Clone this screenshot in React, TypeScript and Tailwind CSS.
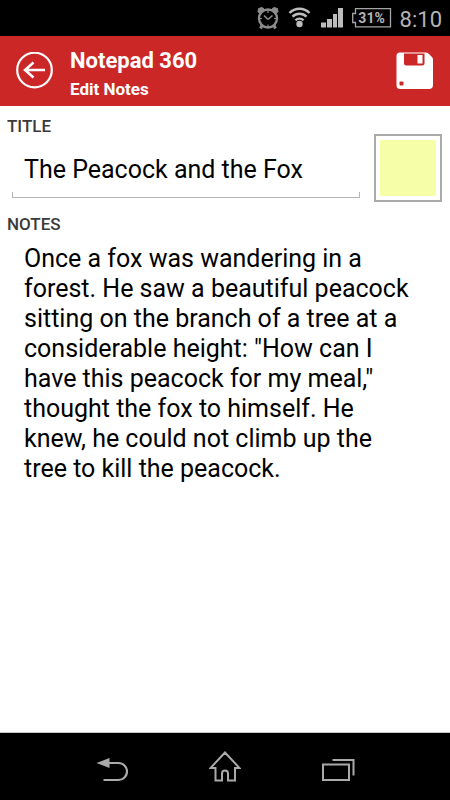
import React from 'react';

const STORY =
    'Once a fox was wandering in a forest. He saw a beautiful peacock sitting on the branch of a tree at a considerable height: "How can I have this peacock for my meal," thought the fox to himself. He knew, he could not climb up the tree to kill the peacock.';

const StatusBar = () => (
    <div className="flex h-9 items-center justify-end bg-black pr-2 text-[#b4b4b4]">
        {/* alarm */}
        <svg className="mr-2 h-6 w-6" viewBox="0 0 24 24" fill="none" stroke="#8c8c8c" strokeWidth="2.400">
            <circle cx="12" cy="12.500" r="9" />
            <path d="M12 13.500L8 9.500M12 13.500l4.500-4" strokeWidth="1.600" />
            <path d="M12 4v3M12 18.500v3M3 12.500h3M18 12.500h3" strokeWidth="1.200" />
            <path d="M2 5.500L2.500 2.500L6 1.500L8 3L3.500 7.500ZM22 5.500L21.500 2.500L18 1.500L16 3L20.500 7.500Z" fill="#8c8c8c" strokeWidth="1" />
            <path d="M6 19.500l-1.500 3M18 19.500l1.500 3" strokeWidth="3" />
        </svg>
        {/* wifi */}
        <svg className="mr-2 h-6 w-6" viewBox="0 0 24 24" fill="none" stroke="#bdbdbd" strokeWidth="2.400">
            <path d="M1.500 7a14 14 0 0 1 20 0" />
            <path d="M4.500 10.700a9.800 9.800 0 0 1 14 0" />
            <path d="M7.500 14.300a5.600 5.600 0 0 1 8 0" />
            <circle cx="11.500" cy="18" r="3.200" fill="#bdbdbd" stroke="none" />
        </svg>
        {/* signal */}
        <svg className="mr-2 h-6 w-6" viewBox="0 0 24 24" fill="#bdbdbd">
            <path d="M1 16.500h5V21.500H1zM7 13h5v8.500H7zM13 8h4v13.500h-4zM18 2h5v19.500h-5z" />
        </svg>
        <div className="relative mr-2 h-5 w-10">
            <svg className="h-5 w-10" viewBox="0 0 40 20" fill="none" stroke="#a5a5a5" strokeWidth="1.300">
                <path d="M3.500 0.700H38.500V18.800H3.500V14.500H0.700V5.500H3.500Z" />
            </svg>
            <span className="absolute inset-0 text-center text-[14px] leading-5 font-bold">31%</span>
        </div>
        <span className="pt-1 text-[22px] leading-8">8:10</span>
    </div>
);

const Header = () => (
    <header className="flex h-[70px] items-center bg-[#cc2727] px-4 text-white">
        <button type="button" aria-label="Back" className="mr-4">
            <svg className="h-[38px] w-[38px]" viewBox="0 0 38 38" fill="none" stroke="white" strokeWidth="2.200">
                <circle cx="18.500" cy="18" r="17.300" />
                <path d="M29 18H10M17.500 10.500L9 18L17.500 25.500" strokeWidth="2.500" />
            </svg>
        </button>
        <div className="flex-1 pt-1">
            <h1 className="text-[22px] leading-8 font-bold">Notepad 360</h1>
            <h2 className="text-[17px] leading-6 font-bold">Edit Notes</h2>
        </div>
        <button type="button" aria-label="Save">
            <svg className="h-[38px] w-[38px]" viewBox="0 0 38 38">
                <path
                    d="M4 0.500H30Q32 0.500 33 2L36 5Q37 6 37 8V33Q37 37 33 37H4Q0.500 37 0.500 33V4Q0.500 0.500 4 0.500Z"
                    fill="white"
                />
                <path d="M8 1.500H28.500V11.500Q28.500 13.500 26.500 13.500H10Q8 13.500 8 11.500Z" fill="#cc2727" />
                <rect x="21.500" y="3" width="5" height="8.500" fill="white" />
                <rect x="3.500" y="29.500" width="4" height="4" rx="1" fill="#cc2727" />
            </svg>
        </button>
    </header>
);

const NavigationBar = () => (
    <nav className="grid h-[67px] grid-cols-3 items-center bg-black px-14">
        <button type="button" aria-label="System back" className="justify-self-center">
            <svg className="h-8 w-8" viewBox="0 0 32 32" fill="none" stroke="#aaa" strokeWidth="2.200">
                <path d="M12 12H22.500a8.400 8.400 0 0 1 0 17H7.500" />
                <path d="M0.500 12L13.500 7V17Z" fill="#aaa" stroke="none" />
            </svg>
        </button>
        <button type="button" aria-label="Home" className="justify-self-center">
            <svg className="h-8 w-8" viewBox="0 0 32 32" fill="none" stroke="#aaa" strokeWidth="2">
                <path d="M16 1.500L1.500 17H6.500V29.500H13V22.500A3 3 0 0 1 19 22.500V29.500H26V17H30.500Z" />
            </svg>
        </button>
        <button type="button" aria-label="Recent apps" className="justify-self-center">
            <svg className="h-8 w-9" viewBox="0 0 36 32" fill="none" stroke="#aaa" strokeWidth="2">
                <rect x="3" y="13.500" width="26" height="15.500" />
                <path d="M12.500 9H33.500V24.500" />
            </svg>
        </button>
    </nav>
);

const App = () => {
    const [title, setTitle] = React.useState('The Peacock and the Fox');
    const [notes, setNotes] = React.useState(STORY);

    return (
        <div className="flex min-h-screen flex-col bg-white font-['Roboto',sans-serif]">
            <StatusBar />
            <Header />

            <main className="flex flex-1 flex-col border-b border-[#c4c4c4] pt-2">
                <div className="flex items-start pr-2">
                    <div className="flex-1">
                        <label htmlFor="title" className="block pl-[7px] text-[17px] leading-6 font-medium text-[#3a3a3a]">
                            TITLE
                        </label>
                        <div className="mt-2 mr-[14px] ml-3">
                            <input
                                id="title"
                                value={title}
                                onChange={(e) => setTitle(e.target.value)}
                                className="block h-[46px] w-full px-3 text-[25px] text-black outline-none"
                            />
                            <div className="h-[6px] border-x border-b border-[#b5b5b5]" />
                        </div>
                    </div>
                    <button type="button" aria-label="Note colour" className="mt-5 border-2 border-[#aaaaaa] p-1">
                        <span className="block h-14 w-14 bg-[#f6ffa8]" />
                    </button>
                </div>

                <label htmlFor="notes" className="mt-[10px] block pl-[7px] text-[17px] leading-6 font-medium text-[#3a3a3a]">
                    NOTES
                </label>
                <textarea
                    id="notes"
                    value={notes}
                    onChange={(e) => setNotes(e.target.value)}
                    className="block w-full flex-1 resize-none pt-2 pr-8 pl-6 text-[25px] leading-[30px] text-black outline-none"
                />
            </main>

            <NavigationBar />
        </div>
    );
};

export default App;
